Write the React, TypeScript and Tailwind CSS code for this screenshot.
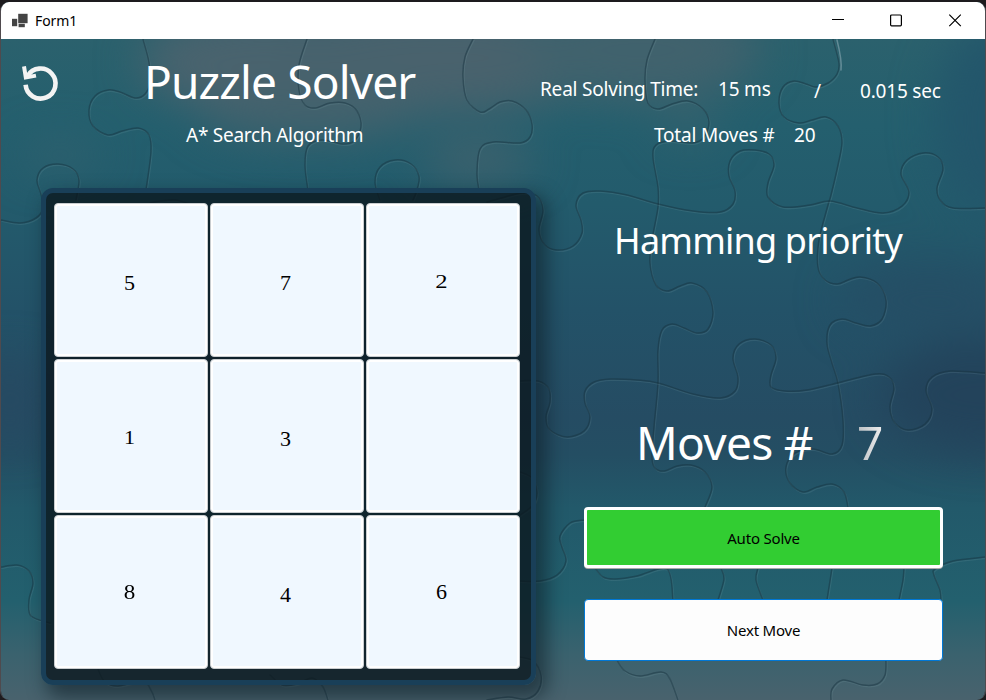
import React from "react";

type Pt = [number, number];

/** Smooths a list of points into one continuous cubic curve. */
function smooth(p: Pt[]): string {
  let d = `M${p[0][0]} ${p[0][1]}`;
  for (let i = 0; i < p.length - 1; i++) {
    const a = p[Math.max(0, i - 1)];
    const b = p[i];
    const c = p[i + 1];
    const e = p[Math.min(p.length - 1, i + 2)];
    d += `C${b[0] + (c[0] - a[0]) / 6} ${b[1] + (c[1] - a[1]) / 6} ${c[0] - (e[0] - b[0]) / 6} ${c[1] - (e[1] - b[1]) / 6} ${c[0]} ${c[1]}`;
  }
  return d;
}

const SEAMS: Pt[][] = [
  [[143, 39], [149, 62], [150, 82], [145, 94], [135, 98], [120, 92], [108, 90], [95, 96], [89, 110], [93, 126], [108, 135], [122, 131], [138, 128], [149, 135], [151, 152], [146, 190]],
  [[307, 39], [299, 65], [299, 90], [305, 105], [315, 108], [330, 103], [345, 103], [357, 111], [361, 127], [354, 141], [342, 144], [322, 140], [308, 146], [305, 165], [308, 190]],
  [[473, 39], [465, 57], [463, 77], [467, 100], [480, 112], [489, 109], [500, 102], [512, 101], [526, 110], [532, 124], [530, 137], [520, 143], [493, 142], [480, 149], [477, 173], [479, 190]],
  [[655, 39], [647, 60], [645, 80], [648, 103], [658, 109], [672, 104], [688, 101], [703, 109], [709, 122], [704, 137], [693, 143], [670, 141], [656, 145], [653, 157], [658, 187], [658, 207], [652, 240], [650, 263], [656, 285], [667, 291], [680, 286], [692, 283], [707, 292], [713, 312], [708, 329], [697, 333], [684, 328], [672, 324], [662, 330], [658, 350], [658, 383], [654, 427], [652, 457], [655, 468], [664, 471], [677, 466], [691, 465], [705, 472], [712, 487], [705, 507]],
  [[833, 39], [839, 63], [837, 74], [828, 83], [816, 87], [806, 84], [794, 81], [783, 87], [779, 103], [784, 117], [799, 123], [812, 120], [826, 117], [838, 126], [842, 142], [838, 165], [831, 195], [828, 205], [819, 240], [818, 267], [825, 280], [837, 284], [848, 280], [860, 277], [877, 283], [886, 300], [882, 319], [870, 326], [856, 323], [842, 319], [830, 325], [827, 343], [832, 363], [838, 383], [843, 420], [842, 445], [832, 454], [813, 449], [795, 453], [786, 467], [790, 483], [803, 492], [817, 487], [832, 484], [844, 492], [848, 507]],
  [[1, 220], [20, 223], [36, 218], [43, 208], [41, 194], [37, 180], [43, 168], [58, 164], [73, 169], [79, 180], [76, 200]],
  [[380, 200], [375, 182], [380, 167], [395, 160], [411, 164], [419, 176], [417, 190], [413, 200]],
  [[150, 203], [160, 201], [175, 200], [190, 204]],
  [[487, 202], [505, 197], [522, 193], [537, 196], [543, 210], [539, 230], [545, 245], [557, 250], [573, 246], [582, 233], [581, 220], [576, 205], [583, 193], [600, 191], [627, 195], [658, 204], [693, 211], [720, 212], [733, 204], [735, 191], [729, 176], [730, 161], [740, 151], [755, 150], [769, 154], [774, 165], [768, 183], [768, 197], [783, 207], [810, 205], [830, 201], [857, 208], [883, 213], [902, 206], [909, 192], [901, 174], [907, 160], [923, 153], [938, 157], [943, 169], [937, 188], [941, 201], [953, 208], [985, 208]],
  [[520, 381], [538, 381], [549, 389], [550, 402], [546, 417], [550, 430], [567, 437], [584, 431], [590, 417], [585, 403], [585, 391], [594, 382], [610, 379], [637, 380], [658, 383], [693, 394], [720, 398], [735, 391], [738, 377], [733, 358], [739, 344], [755, 339], [771, 345], [776, 358], [771, 375], [771, 387], [785, 391], [807, 390], [837, 383], [875, 374], [889, 377], [894, 388], [890, 407], [895, 423], [908, 430], [925, 424], [932, 409], [926, 390], [932, 377], [950, 371], [985, 373]],
  [[520, 472], [532, 478], [537, 492], [533, 505], [520, 515]],
  [[1, 567], [17, 565], [29, 571], [33, 583], [29, 600], [31, 616], [50, 623]],
  [[584, 520], [570, 523], [560, 536], [562, 547], [566, 561], [557, 575], [540, 581], [520, 581]],
  [[595, 568], [603, 577], [615, 579], [637, 576], [667, 569], [673, 600]],
  [[721, 568], [724, 579], [718, 600]],
  [[758, 568], [756, 580], [763, 600]],
  [[832, 568], [827, 600]],
  [[904, 568], [903, 580], [899, 600]],
  [[985, 557], [953, 561], [935, 569], [934, 575], [940, 590], [941, 600]],
  [[617, 660], [625, 671], [640, 676], [661, 672], [670, 679], [678, 700]],
  [[886, 660], [885, 675], [877, 684], [863, 685], [843, 680], [832, 689], [831, 700]],
  [[98, 669], [105, 682], [118, 686], [143, 681], [152, 692], [155, 700]],
  [[270, 675], [282, 685], [297, 684], [312, 678], [323, 687], [328, 700]],
  [[520, 657], [533, 661], [541, 675], [538, 691], [526, 699], [508, 697], [487, 700]],
];

/** Underwater-toned puzzle wallpaper behind the whole form. */
function Wallpaper() {
  return (
    <svg className="absolute inset-0 h-full w-full" viewBox="0 0 986 700">
      <defs>
        <linearGradient id="sea" x1="0" y1="39" x2="0" y2="700" gradientUnits="userSpaceOnUse">
          <stop offset="0" stopColor="#2b616d" />
          <stop offset=".13" stopColor="#245f6e" />
          <stop offset=".25" stopColor="#235b6c" />
          <stop offset=".41" stopColor="#235268" />
          <stop offset=".57" stopColor="#254c63" />
          <stop offset=".63" stopColor="#244e63" />
          <stop offset=".71" stopColor="#22596a" />
          <stop offset=".85" stopColor="#23606e" />
          <stop offset=".93" stopColor="#3a626e" />
          <stop offset="1" stopColor="#49626d" />
        </linearGradient>
        <filter id="haze" x="-50%" y="-50%" width="200%" height="200%" colorInterpolationFilters="sRGB">
          <feGaussianBlur stdDeviation="22" />
        </filter>
      </defs>
      <rect width="986" height="700" fill="url(#sea)" />
      <g filter="url(#haze)">
        <ellipse cx="270" cy="62" rx="130" ry="50" fill="#4a636e" />
        <ellipse cx="440" cy="58" rx="170" ry="54" fill="#49626d" />
        <ellipse cx="640" cy="50" rx="120" ry="50" fill="#41626d" />
        <ellipse cx="310" cy="110" rx="110" ry="30" fill="#44626d" />
        <ellipse cx="478" cy="160" rx="56" ry="20" fill="#42626d" />
        <ellipse cx="690" cy="125" rx="28" ry="16" fill="#37626d" />
        <ellipse cx="60" cy="155" rx="40" ry="14" fill="#31616e" />
        <ellipse cx="995" cy="120" rx="60" ry="100" fill="#23566b" />
        <ellipse cx="990" cy="395" rx="110" ry="56" fill="#23435b" />
        <ellipse cx="930" cy="300" rx="90" ry="34" fill="#254e65" />
        <ellipse cx="10" cy="400" rx="50" ry="40" fill="#264a62" />
      </g>
      <g fill="none" strokeLinecap="round">
        {SEAMS.map((s, i) => (
          <g key={i}>
            <path d={smooth(s)} stroke="#8fb0ba" strokeOpacity=".14" strokeWidth="1.3" transform="translate(1 1.4)" />
            <path d={smooth(s)} stroke="#18323f" strokeOpacity=".48" strokeWidth="1.5" />
          </g>
        ))}
        <path d="M837 40C840 52 842 62 841 70" stroke="#9bb6bf" strokeOpacity=".5" strokeWidth="1.5" />
      </g>
    </svg>
  );
}

function TitleBar() {
  return (
    <header className="flex h-[37px] shrink-0 items-center bg-white pl-[11px] text-black">
      <svg className="h-4 w-4" viewBox="0 0 16 16" fill="#444">
        <rect x="6.2" y="0.8" width="9.4" height="9.4" />
        <rect x="0" y="5.8" width="5.2" height="7.4" />
        <rect x="6.6" y="10.8" width="6.2" height="3.4" />
      </svg>
      <span className="ml-[7px] text-[14px] tracking-[-0.1px]">Form1</span>
      <svg className="mr-[23px] ml-auto h-[13px] w-[130px]" viewBox="0 0 130 13" fill="none" stroke="#000" strokeWidth="1.2">
        <path d="M0 5.5H12" strokeWidth="1" />
        <rect x="58.6" y="1" width="10.8" height="10.8" rx="1" />
        <path d="M117.3 .6L128.8 12.1M128.8 .6L117.3 12.1" />
      </svg>
    </header>
  );
}

interface TileSpec {
  label: string;
  style: string;
}

const TILES: TileSpec[] = [
  { label: "5", style: "translate-y-[3px]" },
  { label: "7", style: "translate-y-[3px]" },
  { label: "2", style: "translate-y-[2px] scale-x-[1.12] scale-y-[0.82]" },
  { label: "1", style: "translate-y-[2px] scale-y-[0.82]" },
  { label: "3", style: "translate-y-[3px]" },
  { label: "", style: "" },
  { label: "8", style: "scale-x-105" },
  { label: "4", style: "translate-y-[3px]" },
  { label: "6", style: "" },
];

function Board() {
  return (
    <div className="ml-10 h-[497px] w-[495px] rounded-[12px] border-[5px] border-[#193f58] bg-[rgba(10,22,28,0.78)] pt-[10px] pl-2 shadow-[8px_10px_18px_3px_rgba(12,28,36,0.55)]">
      <div className="grid w-[466px] grid-cols-3 gap-0.5">
        {TILES.map((t, i) => (
          <div
            key={i}
            className="flex h-[154px] items-center justify-center rounded-[4px] border border-[#c9cdd0] bg-[#f0f8ff] font-['Liberation_Serif',serif] text-[22px] text-black shadow-[inset_0_0_0_2px_#fff]"
          >
            <span className={`-ml-[3px] inline-block leading-none ${t.style}`}>{t.label}</span>
          </div>
        ))}
      </div>
    </div>
  );
}

function LeftPane() {
  return (
    <section className="flex w-[535px] shrink-0 flex-col">
      <div className="flex h-[149px]">
        <svg className="mt-[25px] ml-[21px] h-9 w-9 shrink-0 overflow-visible" viewBox="22 65 36 36" fill="none" stroke="#f3f3f3">
          <path d="M25.6 85.8A15 15 0 1 0 27.6 77" strokeWidth="4.6" />
          <path d="M24 67.4L25.8 78.4L36 76.6" strokeWidth="4" />
        </svg>
        <div className="flex flex-col">
          <h1 className="h-[83px] pl-[86px] text-[46px] leading-[84px] tracking-[-0.85px] whitespace-nowrap">Puzzle Solver</h1>
          <p className="h-[26px] pl-[128px] text-[19px] leading-[26px] tracking-[-0.25px] whitespace-nowrap">A* Search Algorithm</p>
        </div>
      </div>
      <Board />
    </section>
  );
}

function RightPane() {
  return (
    <section className="flex flex-1 flex-col whitespace-nowrap">
      <div className="flex pt-[34px] text-[19px] leading-8 tracking-[-0.2px]">
        <span className="ml-1 w-[178px]">Real Solving Time:</span>
        <span className="w-[96px]">15 ms</span>
        <span className="w-[46px] pt-0.5">/</span>
        <span className="pt-0.5">0.015 sec</span>
      </div>
      <div className="mt-3 flex text-[19px] leading-8 tracking-[-0.2px]">
        <span className="ml-[118px] w-[140px]">Total Moves #</span>
        <span>20</span>
      </div>
      <h2 className="mt-16 mb-px pl-[78px] text-[36px] leading-[51px] tracking-[-0.8px]">Hamming priority</h2>
      <div className="mt-[145px] mb-px flex text-[46px] leading-[60px] tracking-[-0.7px]">
        <span className="ml-[100px] w-[221px]">Moves #</span>
        <span className="bg-linear-to-r from-[#b9bec2] to-[#f0f0f0] bg-clip-text text-transparent">7</span>
      </div>
      <button className="mt-[34px] ml-[48px] h-[61px] w-[359px] rounded-[4px] border-[3px] border-white bg-[#32cd32] pt-px text-[15px] tracking-[-0.2px] text-black shadow-[0_1px_0_#a9a9a9]">
        Auto Solve
      </button>
      <button className="mt-[31px] ml-[48px] h-[62px] w-[359px] rounded-[4px] border border-[#0078d7] bg-[#fdfdfd] text-[15px] tracking-[-0.2px] text-black">
        Next Move
      </button>
    </section>
  );
}

export default function App() {
  return (
    <div className="h-[700px] w-[986px] overflow-hidden bg-[#1d1b1e] pt-0.5 font-['Noto_Sans','Open_Sans',sans-serif] text-white">
      <div className="relative h-[698px] overflow-hidden rounded-[9px] border-x border-[#4f4a4e]">
        <div className="absolute -top-0.5 -left-px h-[700px] w-[986px]">
          <Wallpaper />
        </div>
        <div className="relative flex h-full flex-col">
          <TitleBar />
          <main className="flex flex-1">
            <LeftPane />
            <RightPane />
          </main>
        </div>
      </div>
    </div>
  );
}
